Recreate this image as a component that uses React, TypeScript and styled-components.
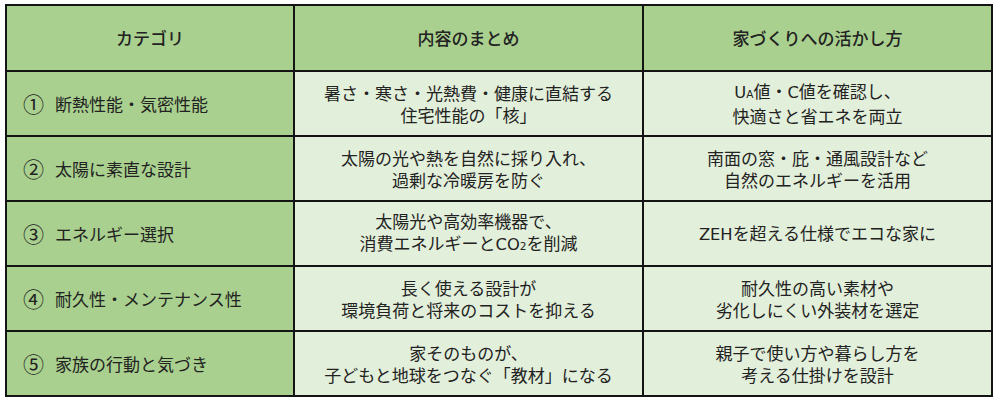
import React from 'react';
import styled, { createGlobalStyle } from 'styled-components';

const GlobalStyle = createGlobalStyle`
  html, body {
    margin: 0;
    padding: 0;
    background: #ffffff;
  }
  body {
    font-family: "Noto Sans CJK JP", "Noto Sans", sans-serif;
    color: #222222;
  }
`;

// Latin letters in the source are wider than Noto's, so they get their own face
const Latin = styled.span`
  font-family: "DejaVu Sans", "Noto Sans", sans-serif;
  font-size: 0.96em;
`;

const Small = styled.span`
  font-family: "DejaVu Sans", "Noto Sans", sans-serif;
  font-size: 0.62em;
`;

type Row = {
  no: string;
  category: string;
  summary: React.ReactNode;
  usage: React.ReactNode;
};

const rows: Row[] = [
  {
    no: '①',
    category: '断熱性能・気密性能',
    summary: (
      <>
        暑さ・寒さ・光熱費・健康に直結する
        <br />
        住宅性能の「核」
      </>
    ),
    usage: (
      <>
        <Latin>U</Latin>
        <Small>A</Small>値・<Latin>C</Latin>値を確認し、
        <br />
        快適さと省エネを両立
      </>
    ),
  },
  {
    no: '②',
    category: '太陽に素直な設計',
    summary: (
      <>
        太陽の光や熱を自然に採り入れ、
        <br />
        過剰な冷暖房を防ぐ
      </>
    ),
    usage: (
      <>
        南面の窓・庇・通風設計など
        <br />
        自然のエネルギーを活用
      </>
    ),
  },
  {
    no: '③',
    category: 'エネルギー選択',
    summary: (
      <>
        太陽光や高効率機器で、
        <br />
        消費エネルギーと<Latin>CO</Latin>
        <Small>2</Small>を削減
      </>
    ),
    usage: (
      <>
        <Latin>ZEH</Latin>を超える仕様でエコな家に
      </>
    ),
  },
  {
    no: '④',
    category: '耐久性・メンテナンス性',
    summary: (
      <>
        長く使える設計が
        <br />
        環境負荷と将来のコストを抑える
      </>
    ),
    usage: (
      <>
        耐久性の高い素材や
        <br />
        劣化しにくい外装材を選定
      </>
    ),
  },
  {
    no: '⑤',
    category: '家族の行動と気づき',
    summary: (
      <>
        家そのものが、
        <br />
        子どもと地球をつなぐ「教材」になる
      </>
    ),
    usage: (
      <>
        親子で使い方や暮らし方を
        <br />
        考える仕掛けを設計
      </>
    ),
  },
];

export default function App() {
  return (
    <Page>
      <GlobalStyle />
      <Table>
        <colgroup>
          <col style={{ width: 288 }} />
          <col style={{ width: 349 }} />
          <col style={{ width: 349 }} />
        </colgroup>
        <thead>
          <HeadRow>
            <HeadCell>カテゴリ</HeadCell>
            <HeadCell>内容のまとめ</HeadCell>
            <HeadCell>家づくりへの活かし方</HeadCell>
          </HeadRow>
        </thead>
        <tbody>
          {rows.map((row) => (
            <BodyRow key={row.no}>
              <CategoryCell>
                <Num>{row.no}</Num>
                {row.category}
              </CategoryCell>
              <TextCell>{row.summary}</TextCell>
              <TextCell>{row.usage}</TextCell>
            </BodyRow>
          ))}
        </tbody>
      </Table>
    </Page>
  );
}

const Page = styled.div`
  padding: 4px 0 0 5px;
`;

const Table = styled.table`
  width: 986px;
  border-collapse: collapse;
  table-layout: fixed;
  font-size: 17px;
  line-height: 22px;
`;

const HeadRow = styled.tr`
  height: 66px;
`;

const BodyRow = styled.tr`
  height: 65px;
`;

const Cell = styled.td`
  border: 2px solid #141414;
  padding: 0;
  vertical-align: middle;
`;

const HeadCell = styled(Cell).attrs({ as: 'th' })`
  background: #a9d08e;
  font-weight: 500;
  text-align: center;
`;

const CategoryCell = styled(Cell)`
  background: #a9d08e;
  text-align: left;
  padding-left: 16px;
`;

const TextCell = styled(Cell)`
  background: #e2efda;
  text-align: center;
`;

const Num = styled.span`
  display: inline-block;
  font-size: 21px;
  margin-right: 11px;
  vertical-align: -1px;
`;
